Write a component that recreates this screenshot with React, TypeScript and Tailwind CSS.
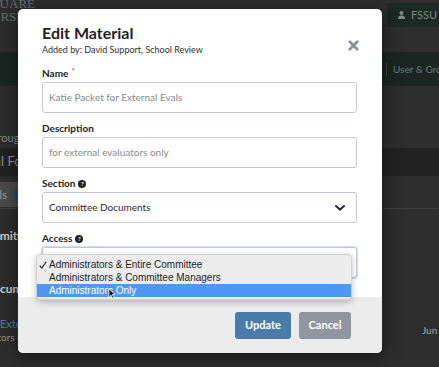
import React from "react";

const labelCls = "flex items-center gap-[3px] text-[10px] leading-[17px] font-bold text-[#222]";
const inputCls =
  "h-[31px] w-full border border-[#c4c9d2] rounded-[3px] pl-[6px] pr-[11px] flex items-center justify-between text-[10px] bg-white";

const Help = () => (
  <span className="w-[8px] h-[8px] rounded-full bg-[#222] text-white text-[6px] leading-[8px] font-bold flex items-center justify-center">
    ?
  </span>
);

const Chevron = () => (
  <svg width="10" height="6" viewBox="0 0 10 6">
    <path d="M1 1 L5 4.6 L9 1" fill="none" stroke="#2a2a2a" strokeWidth="2" strokeLinecap="round" />
  </svg>
);

const options = [
  "Administrators & Entire Committee",
  "Administrators & Committee Managers",
  "Administrators Only",
];

const AccessMenu = () => (
  <div className="absolute z-10 top-[7px] left-[-6px] w-[316px] pt-[3px] pb-[2px] bg-[#ececec] border border-[#d2d2d2] rounded-[4px] shadow-[0_2px_6px_rgba(0,0,0,0.25)] font-['Liberation_Sans',Arial,sans-serif] text-[10px]">
    {options.map((o, i) => (
      <div
        key={o}
        className={`relative h-[13px] leading-[13px] pl-[12px] ${
          i === 2 ? "bg-[#4f97f5] text-white" : "text-[#1e1e1e]"
        }`}
      >
        {i === 0 && (
          <svg className="absolute left-[2px] top-[3px]" width="8" height="8" viewBox="0 0 8 8">
            <path d="M0.8 4.6 L2.8 7 L7.2 0.8" fill="none" stroke="#1e1e1e" strokeWidth="1.1" />
          </svg>
        )}
        {o}
      </div>
    ))}
    {/* mouse pointer */}
    <svg className="absolute left-[71px] top-[33px]" width="8" height="11" viewBox="0 0 10 14">
      <path d="M1 1 L1 11.5 L3.6 9 L5.6 13 L7.4 12.2 L5.4 8.3 L9 8.3 Z" fill="#111" stroke="#fff" strokeWidth="1" />
    </svg>
  </div>
);

export default function App() {
  return (
    <div className="relative w-[439px] h-[367px] overflow-hidden bg-[#2d2d2d] font-['Lato','Open_Sans',sans-serif]">
      {/* page behind the dialog */}
      <div className="h-[52px] flex justify-between">
        <div className="mt-[-3px] font-['Liberation_Serif',serif] text-[13px] leading-[13px] text-[#6c6c6c] whitespace-nowrap">
          <div className="ml-[-17px]">SQUARE</div>
          <div className="ml-[-40px]">UNIVERSITY</div>
        </div>
        <div className="mt-[3px] h-[24px] w-[52px] bg-[#1b2824] rounded-l-[3px] flex items-center pl-[11px] gap-[6px] text-[11px] text-[#7d8c88] overflow-hidden whitespace-nowrap">
          <svg width="7" height="8" viewBox="0 0 7 8">
            <circle cx="3.5" cy="2" r="2" fill="#7d8c88" />
            <path d="M0 8 C0 5 1.5 4.4 3.5 4.4 C5.5 4.4 7 5 7 8 Z" fill="#7d8c88" />
          </svg>
          FSSU
        </div>
      </div>
      <div className="h-[34px] bg-[#1a2622] flex justify-end items-center">
        <div className="w-[53px] flex items-center overflow-hidden whitespace-nowrap">
          <span className="w-px h-[13px] bg-[#34443f] shrink-0" />
          <span className="ml-[6px] text-[10px] text-[#6b7a76]">User &amp; Groups</span>
        </div>
      </div>
      <div className="h-[123px] border-b border-[#404040] flex flex-col whitespace-nowrap">
        <div className="mt-[45px] ml-[-37px] text-[11px] leading-[14px] text-[#8a8a8a]">Walkthrough</div>
        <div className="mt-[3px] h-[28px] bg-[#222] flex items-center">
          <span className="ml-[-43px] text-[13px] text-[#8e8e8e]">Material Forms</span>
        </div>
        <div className="mt-[6px] h-[25px] w-[60px] bg-[#4b4b4b] flex items-center">
          <span className="ml-[-20px] text-[12px] text-[#9a9a9a]">Tools</span>
          <span className="ml-[6px] w-[12px] h-[12px] rounded-full bg-[#2c4968]" />
        </div>
      </div>
      <div className="flex justify-between whitespace-nowrap">
        <div className="flex flex-col">
          <div className="mt-[19px] ml-[-25px] text-[12px] leading-[16px] font-bold text-[#cfcfcf]">Committee</div>
          <div className="mt-[37px] ml-[-16px] text-[12px] leading-[16px] font-bold text-[#cfcfcf]">Documents</div>
          <div className="mt-[20px] text-[11px] leading-[14px] text-[#4b7db3]">External</div>
          <div className="ml-[-31px] text-[10px] leading-[12px] text-[#959595]">Evaluators copy</div>
        </div>
        <div className="mt-[114px] w-[17px] overflow-hidden text-[10px] leading-[14px] text-[#a8a8a8]">Jun 24, 2018</div>
      </div>

      {/* dialog */}
      <div className="absolute left-[18px] top-[9px] w-[364px] h-[344px] bg-white rounded-[5px] shadow-[0_4px_18px_rgba(0,0,0,0.5)] flex flex-col">
        <div className="h-[288px] pl-[24px] pr-[25px] pt-[14px]">
          <div className="flex justify-between items-start">
            <div>
              <h2 className="text-[16px] leading-[20px] font-bold text-[#232323]">Edit Material</h2>
              <p className="mt-[1px] text-[9px] leading-[12px] text-[#2e2e2e]">Added by: David Support, School Review</p>
            </div>
            <svg className="mt-[17px] mr-[-2px]" width="11" height="11" viewBox="0 0 11 11">
              <path d="M1.8 1.8 L9.2 9.2 M9.2 1.8 L1.8 9.2" stroke="#8b909a" strokeWidth="2.8" strokeLinecap="round" />
            </svg>
          </div>

          <div className={`${labelCls} mt-[9px]`}>
            Name<span className="text-[#d9534f] text-[8px] leading-none -mt-[5px]">*</span>
          </div>
          <div className={inputCls}>
            <span className="text-[#8a8a8a]">Katie Packet for External Evals</span>
          </div>

          <div className={`${labelCls} mt-[7px]`}>Description</div>
          <div className={inputCls}>
            <span className="text-[#8a8a8a]">for external evaluators only</span>
          </div>

          <div className={`${labelCls} mt-[7px]`}>
            Section <Help />
          </div>
          <div className={inputCls}>
            <span className="text-[#2b2b2b]">Committee Documents</span>
            <Chevron />
          </div>

          <div className={`${labelCls} mt-[7px]`}>
            Access <Help />
          </div>
          <div className="relative">
            <div className={`${inputCls} border-[#5fa0e6] shadow-[0_0_0_1px_rgba(95,160,230,0.35)]`}>
              <span className="text-[#2b2b2b]">Administrators Only</span>
              <Chevron />
            </div>
            <AccessMenu />
          </div>
        </div>

        <div className="h-[56px] bg-[#ececec] rounded-b-[5px] flex justify-end items-start gap-[8px] pt-[15px] pr-[31px]">
          <button className="w-[56px] h-[27px] rounded-[3px] bg-[#4a7cab] text-white text-[11px] font-bold">Update</button>
          <button className="w-[52px] h-[27px] rounded-[3px] bg-[#8f96a0] text-white text-[11px] font-bold">Cancel</button>
        </div>
      </div>
    </div>
  );
}
